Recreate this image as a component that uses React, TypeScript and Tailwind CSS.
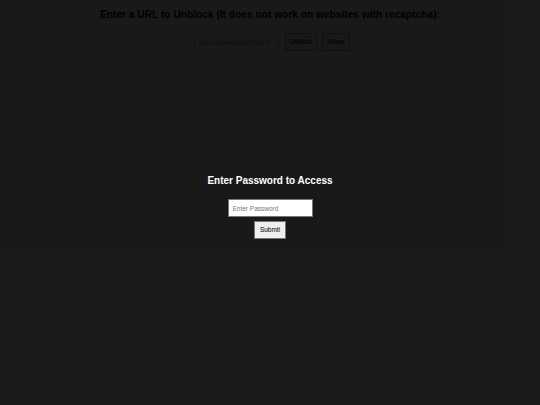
import React from 'react';

export default function App() {
  const [password, setPassword] = React.useState('');

  return (
    <div className="relative h-[405px] w-[540px] overflow-hidden bg-white font-['Liberation_Sans',Arial,sans-serif]">
      {/* page underneath */}
      <div className="flex flex-col items-center pt-[7px]">
        <h2 className="text-[10.2px] font-bold leading-[15px] text-black">
          Enter a URL to Unblock (It does not work on websites with recaptcha):
        </h2>
        <div className="mt-[11px] flex items-center pl-[4px]">
          <input
            className="h-[18px] w-[85px] border border-[#c8c8c8] px-[3px] text-[6.5px] outline-none placeholder:text-[#8a8a8a]"
            placeholder="https://www.secretofthesi"
          />
          <button className="ml-[6px] h-[18px] w-[32px] border border-[#a0a0a0] bg-[#efefef] text-[6.5px] text-black">
            Unblock
          </button>
          <button className="ml-[5px] h-[18px] w-[28px] border border-[#a0a0a0] bg-[#efefef] text-[6.5px] text-black">
            Home
          </button>
        </div>
      </div>

      {/* password overlay */}
      <div className="absolute inset-0 flex flex-col items-center bg-black/90 pt-[174px]">
        <h2 className="text-[10px] font-bold leading-[14px] text-white">Enter Password to Access</h2>
        <input
          type="password"
          value={password}
          onChange={(e) => setPassword(e.target.value)}
          placeholder="Enter Password"
          className="mt-[11px] h-[18px] w-[85px] border border-[#767676] bg-white px-[4px] text-[6.5px] text-black outline-none placeholder:text-[#757575]"
        />
        <button className="mt-[4px] h-[18px] w-[32px] border border-[#767676] bg-[#efefef] text-[6.5px] text-black">
          Submit
        </button>
      </div>
    </div>
  );
}
